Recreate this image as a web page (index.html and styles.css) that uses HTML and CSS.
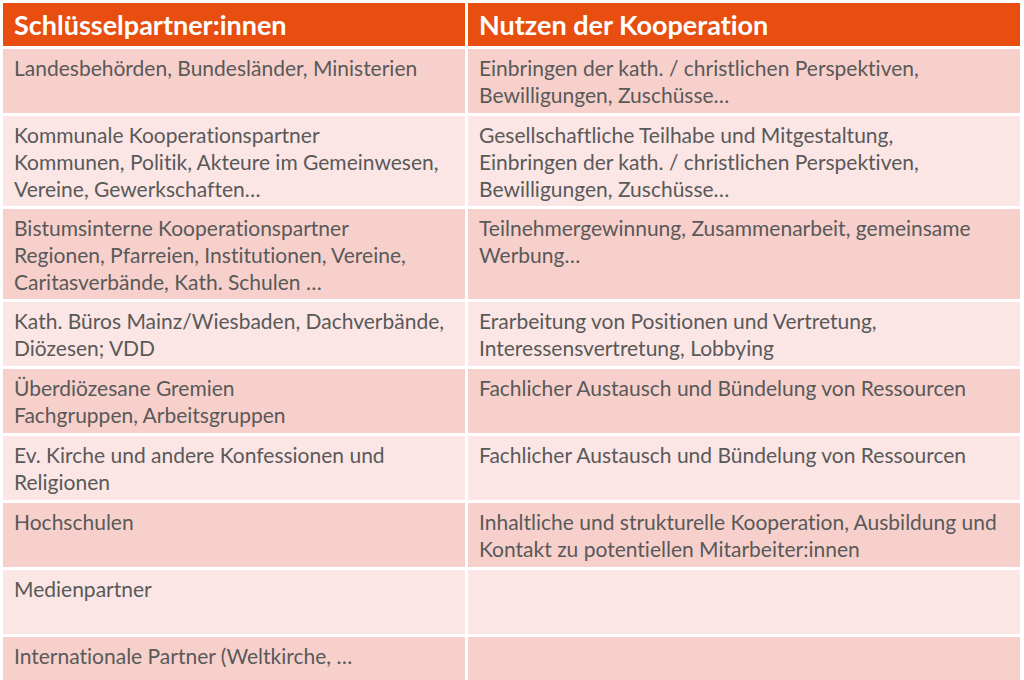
FILE: index.html
```html
<!DOCTYPE html>
<html lang="de">
<head>
<meta charset="utf-8">
<title>Schlüsselpartner:innen</title>
<link rel="stylesheet" href="styles.css">
</head>
<body>
<table class="koop">
  <colgroup>
    <col class="c1">
    <col class="c2">
  </colgroup>
  <thead>
    <tr class="head">
      <th>Schlüsselpartner:innen</th>
      <th>Nutzen der Kooperation</th>
    </tr>
  </thead>
  <tbody>
    <tr class="odd">
      <td>Landesbehörden, Bundesländer, Ministerien</td>
      <td>Einbringen der kath. / christlichen Perspektiven,<br>Bewilligungen, Zuschüsse…</td>
    </tr>
    <tr class="even">
      <td>Kommunale Kooperationspartner<br>Kommunen, Politik, Akteure im Gemeinwesen,<br>Vereine, Gewerkschaften…</td>
      <td>Gesellschaftliche Teilhabe und Mitgestaltung,<br>Einbringen der kath. / christlichen Perspektiven,<br>Bewilligungen, Zuschüsse…</td>
    </tr>
    <tr class="odd">
      <td>Bistumsinterne Kooperationspartner<br>Regionen, Pfarreien, Institutionen, Vereine,<br>Caritasverbände, Kath. Schulen …</td>
      <td>Teilnehmergewinnung, Zusammenarbeit, gemeinsame<br>Werbung…</td>
    </tr>
    <tr class="even">
      <td>Kath. Büros Mainz/Wiesbaden, Dachverbände,<br>Diözesen; VDD</td>
      <td>Erarbeitung von Positionen und Vertretung,<br>Interessensvertretung, Lobbying</td>
    </tr>
    <tr class="odd">
      <td>Überdiözesane Gremien<br>Fachgruppen, Arbeitsgruppen</td>
      <td>Fachlicher Austausch und Bündelung von Ressourcen</td>
    </tr>
    <tr class="even">
      <td>Ev. Kirche und andere Konfessionen und<br>Religionen</td>
      <td>Fachlicher Austausch und Bündelung von Ressourcen</td>
    </tr>
    <tr class="odd">
      <td>Hochschulen</td>
      <td>Inhaltliche und strukturelle Kooperation, Ausbildung und<br>Kontakt zu potentiellen Mitarbeiter:innen</td>
    </tr>
    <tr class="even">
      <td>Medienpartner</td>
      <td></td>
    </tr>
    <tr class="odd">
      <td>Internationale Partner (Weltkirche, …</td>
      <td></td>
    </tr>
  </tbody>
</table>
</body>
</html>
```
FILE: styles.css
```css
html, body {
  margin: 0;
  padding: 0;
  background: #ffffff;
}

body {
  font-family: Lato, "Open Sans", "Liberation Sans", sans-serif;
  font-variant-ligatures: none;
  overflow: hidden;
  height: 680px;
}

.koop {
  border-collapse: separate;
  border-spacing: 3px;
  table-layout: fixed;
  width: 1023px;
}

.c1 { width: 462px; }
.c2 { width: 552px; }

.koop th,
.koop td {
  box-sizing: border-box;
  padding: 0 11px;
  white-space: nowrap;
  overflow: hidden;
}

.head th {
  height: 43px;
  background: #e84e0f;
  color: #ffffff;
  font-weight: 700;
  font-size: 27px;
  text-align: left;
  vertical-align: middle;
}

.koop td {
  height: 64px;
  padding-top: 5px;
  padding-bottom: 4px;
  font-size: 21px;
  line-height: 27px;
  color: #595959;
  vertical-align: top;
}

.odd td { background: #f7d0cc; }
.even td { background: #fbe6e5; }
```
